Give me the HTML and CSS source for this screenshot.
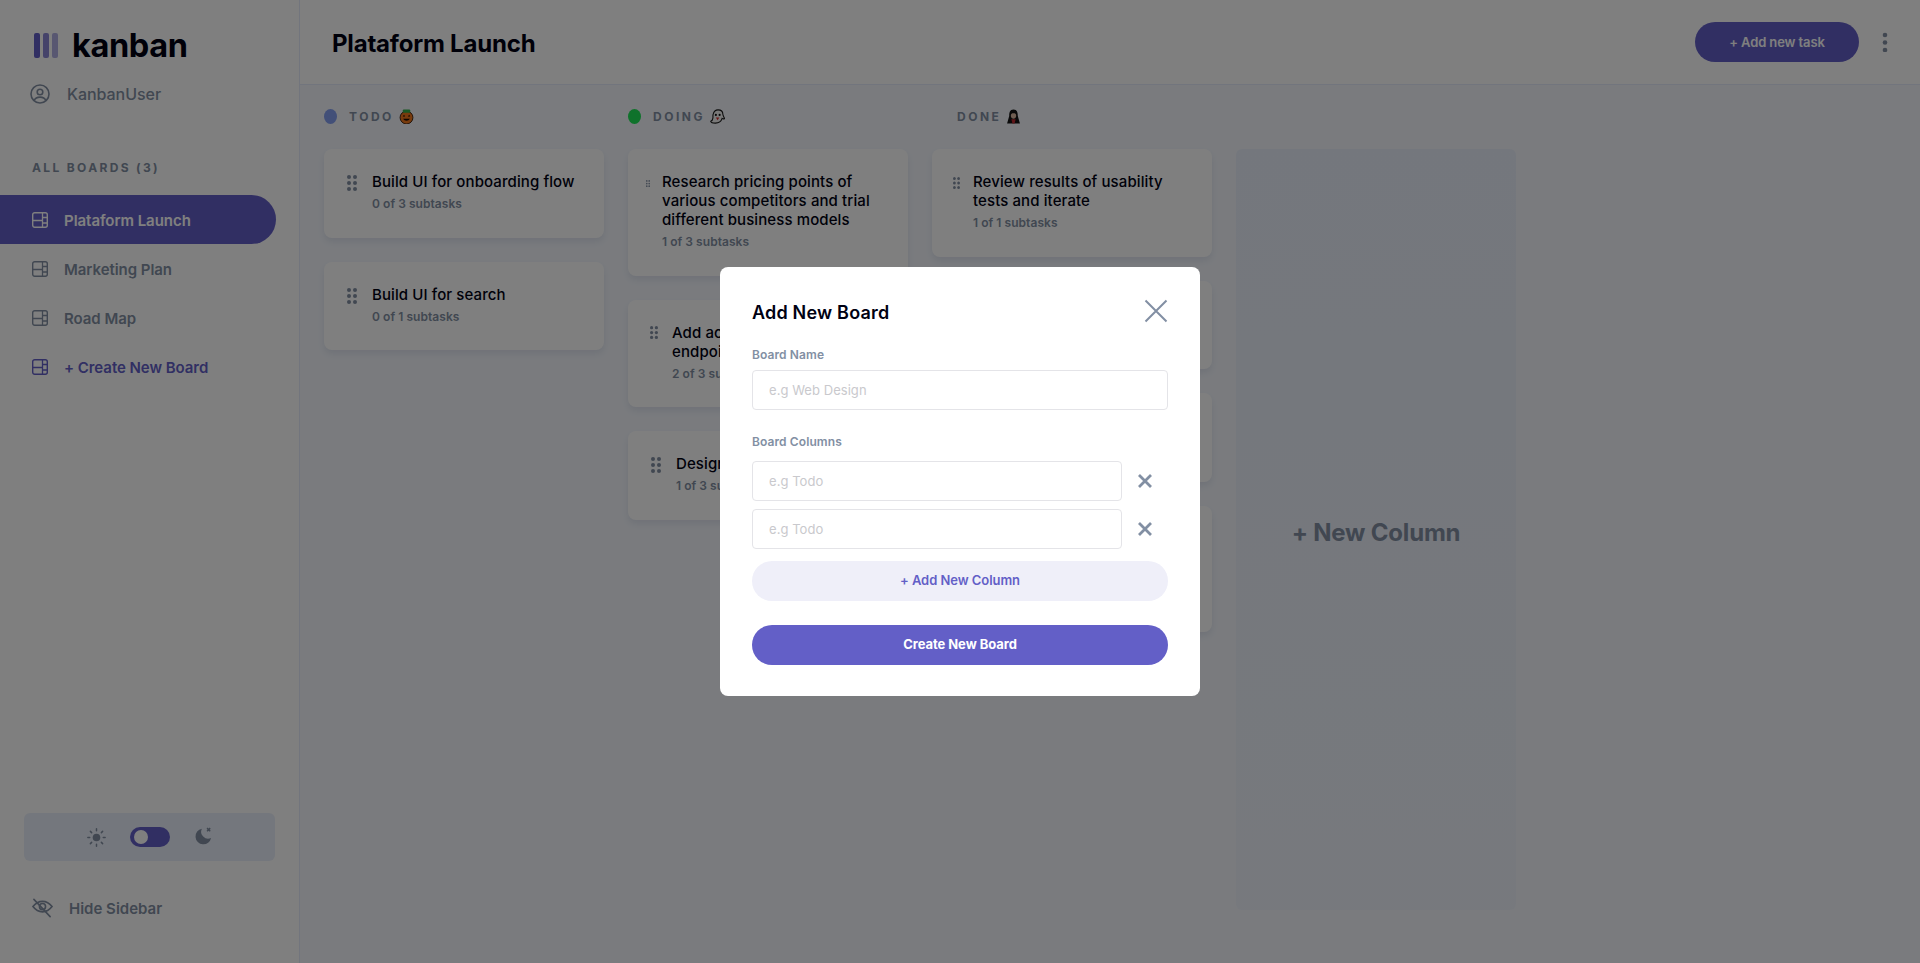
FILE: index.html
```html
<!DOCTYPE html>
<html lang="en">
<head>
    <meta charset="UTF-8"/>
    <meta name="viewport" content="width=device-width, initial-scale=1.0"/>
    <title>Kanban</title>
    <link rel="stylesheet" href="styles.css">
</head>
<body>
    <svg class="defs" width="0" height="0">
        <symbol id="board" viewBox="0 0 16 16">
            <rect x="0.7" y="0.7" width="14.6" height="14.6" rx="2" fill="none" stroke="currentColor" stroke-width="1.4"/>
            <path d="M1 8.500H10.500M10.500 1V15M10.500 5.500H15M10.500 11H15" fill="none" stroke="currentColor" stroke-width="1.3"/>
        </symbol>
        <symbol id="grip" viewBox="0 0 10 16" preserveAspectRatio="none">
            <circle cx="2" cy="2" r="2"/><circle cx="8" cy="2" r="2"/>
            <circle cx="2" cy="8" r="2"/><circle cx="8" cy="8" r="2"/>
            <circle cx="2" cy="14" r="2"/><circle cx="8" cy="14" r="2"/>
        </symbol>
    </svg>

    <aside class="sidebar">
        <div class="logo">
            <svg class="logo-bars" viewBox="0 0 24 25">
                <rect width="6" height="25" rx="2" fill="#635fc7"/>
                <rect x="9" width="6" height="25" rx="2" fill="#635fc7" opacity="0.75"/>
                <rect x="18" width="6" height="25" rx="2" fill="#635fc7" opacity="0.5"/>
            </svg>
            <span class="logo-text">kanban</span>
        </div>
        <div class="user">
            <svg class="user-icon" viewBox="0 0 20 20" fill="none" stroke="currentColor" stroke-width="1.6">
                <circle cx="10" cy="10" r="9"/>
                <circle cx="10" cy="8" r="2.800"/>
                <path d="M4.200 16.400c1-2.400 3-3.300 5.800-3.300s4.800.9 5.800 3.300"/>
            </svg>
            <span>KanbanUser</span>
        </div>
        <h2 class="boards-title">ALL BOARDS (3)</h2>
        <nav class="boards">
            <a class="board-link active"><svg class="board-icon"><use href="#board"/></svg><span>Plataform Launch</span></a>
            <a class="board-link"><svg class="board-icon"><use href="#board"/></svg><span>Marketing Plan</span></a>
            <a class="board-link"><svg class="board-icon"><use href="#board"/></svg><span>Road Map</span></a>
            <a class="board-link create"><svg class="board-icon"><use href="#board"/></svg><span>+ Create New Board</span></a>
        </nav>
        <div class="theme">
            <svg class="sun" viewBox="0 0 18 18" fill="none" stroke="currentColor" stroke-width="1.400" stroke-linecap="round">
                <circle cx="9" cy="9" r="3.600" fill="currentColor" stroke="none"/>
                <path d="M9 .8v1.800M9 15.400v1.800M.8 9h1.800M15.400 9h1.800M3.200 3.200l1.200 1.200M13.600 13.600l1.200 1.200M14.800 3.200l-1.200 1.200M4.400 13.600l-1.200 1.200"/>
            </svg>
            <div class="toggle"><span class="knob"></span></div>
            <svg class="moon" viewBox="0 0 16 16">
                <path d="M7 1.500A7 7 0 1 0 15.200 9.800 6.200 6.200 0 0 1 7 1.500Z" fill="currentColor"/>
                <path d="M11.600 1l2.800 2.800M14.400 1l-2.800 2.800" stroke="currentColor" stroke-width="1.300" fill="none"/>
            </svg>
        </div>
        <div class="hide-sidebar">
            <svg class="eye" viewBox="0 0 22 20" fill="none" stroke="currentColor" stroke-width="1.700" stroke-linecap="round">
                <path d="M1 8.500C4 4.500 7 3 11 3s7 1.500 10 5.500c-3 4-6 5.500-10 5.500S4 12.500 1 8.500Z"/>
                <circle cx="11" cy="8.500" r="3.200"/>
                <path d="M2 1l17 18"/>
            </svg>
            <span>Hide Sidebar</span>
        </div>
    </aside>

    <main class="main">
        <header class="topbar">
            <h1>Plataform Launch</h1>
            <button class="add-task">+ Add new task</button>
            <svg class="more" viewBox="0 0 6 20"><circle cx="3" cy="3" r="2.300"/><circle cx="3" cy="10.500" r="2.300"/><circle cx="3" cy="18" r="2.300"/></svg>
        </header>

        <section class="board">
            <div class="column">
                <div class="column-head">
                    <span class="dot todo"></span>TODO
                    <svg class="emoji" viewBox="0 0 14 14"><circle cx="7" cy="8" r="6" fill="#f0761a" stroke="#2a1405" stroke-width="0.8"/><rect x="3.500" y="0.500" width="7" height="3" rx="1" fill="#35b04a"/><path d="M3.500 7l2.200 0-1-1.700zM8.300 7l2.200 0-1-1.700zM3.800 9.200c1.500 2.300 4.900 2.300 6.400 0z" fill="#1a0c03"/></svg>
                </div>
                <div class="card">
                    <svg class="grip"><use href="#grip"/></svg>
                    <div><h3>Build UI for onboarding flow</h3><p>0 of 3 subtasks</p></div>
                </div>
                <div class="card">
                    <svg class="grip"><use href="#grip"/></svg>
                    <div><h3>Build UI for search</h3><p>0 of 1 subtasks</p></div>
                </div>
            </div>

            <div class="column">
                <div class="column-head">
                    <span class="dot doing"></span>DOING
                    <svg class="emoji" viewBox="0 0 14 14"><path d="M7.500 .8c2.800 0 4.500 1.800 4.500 4.200 0 1.200 1.500 3 1.500 4-1 .4-1.600.2-2.200-.2C10.500 11.500 8 13.200 5 13.200 3 13.200 1 12.500.7 11.500c1.200-.4 1.800-1.500 2-3 .2-1.500-.2-2 .2-3.500C3.500 2.500 5 .8 7.500 .8Z" fill="#f2f2f2" stroke="#161616" stroke-width="1"/><circle cx="5.500" cy="5.500" r="1" fill="#111"/><circle cx="9" cy="5.500" r="1" fill="#111"/><path d="M5.500 8h3.200l-1.600 2.400z" fill="#d82a2a"/></svg>
                </div>
                <div class="card tiny">
                    <svg class="grip"><use href="#grip"/></svg>
                    <div><h3>Research pricing points of various competitors and trial different business models</h3><p>1 of 3 subtasks</p></div>
                </div>
                <div class="card mid">
                    <svg class="grip"><use href="#grip"/></svg>
                    <div><h3>Add account management endpoints</h3><p>2 of 3 subtasks</p></div>
                </div>
                <div class="card">
                    <svg class="grip"><use href="#grip"/></svg>
                    <div><h3>Design onboarding flow</h3><p>1 of 3 subtasks</p></div>
                </div>
            </div>

            <div class="column">
                <div class="column-head">
                    <span class="dot done"></span>DONE
                    <svg class="emoji" viewBox="0 0 14 14"><path d="M7 .5C3.500.5 3 3.500 3 6.500L1 13.500h12l-2-7c0-3-.5-6-4-6Z" fill="#141414"/><path d="M4.500 6.500C4.500 4.500 5.500 4 7 4s2.500.5 2.500 2.500C9.500 8 8.200 9 7 9S4.500 8 4.500 6.500Z" fill="#e0bda4"/><path d="M5 9.500h4l-1 4H6z" fill="#c02a30"/></svg>
                </div>
                <div class="card snug">
                    <svg class="grip"><use href="#grip"/></svg>
                    <div><h3>Review results of usability tests and iterate</h3><p>1 of 1 subtasks</p></div>
                </div>
                <div class="card blank one"></div>
                <div class="card blank one"></div>
                <div class="card blank three"></div>
            </div>

            <div class="new-column">+ New Column</div>
        </section>
    </main>

    <div class="overlay"></div>

    <form class="modal">
        <div class="modal-head">
            <h2>Add New Board</h2>
            <svg class="modal-close" viewBox="0 0 24 24" fill="none" stroke="currentColor" stroke-width="2"><path d="M1.500 1.500l21 21M22.500 1.500l-21 21"/></svg>
        </div>
        <label class="field-label" for="boardName">Board Name</label>
        <input class="field" id="boardName" type="text" placeholder="e.g Web Design">
        <label class="field-label columns-label">Board Columns</label>
        <div class="column-row">
            <input class="field" type="text" placeholder="e.g Todo">
            <svg class="remove" viewBox="0 0 14 14" fill="none" stroke="currentColor" stroke-width="2.800"><path d="M1 1l12 12M13 1L1 13"/></svg>
        </div>
        <div class="column-row">
            <input class="field" type="text" placeholder="e.g Todo">
            <svg class="remove" viewBox="0 0 14 14" fill="none" stroke="currentColor" stroke-width="2.800"><path d="M1 1l12 12M13 1L1 13"/></svg>
        </div>
        <button class="btn btn-light" type="button">+ Add New Column</button>
        <button class="btn btn-primary" type="button">Create New Board</button>
    </form>
</body>
</html>
```

FILE: styles.css
```css
* {
    box-sizing: border-box;
}
body {
    height: 100vh;
    margin: 0;
    display: flex;
    overflow: hidden;
    font-family: Inter, "Open Sans", sans-serif;
    background-color: #f4f7fd;
    color: #000112;
}
.defs {
    position: absolute;
}
h1, h2, h3, p {
    margin: 0;
}

/* sidebar */
.sidebar {
    width: 300px;
    flex-shrink: 0;
    display: flex;
    flex-direction: column;
    background-color: #fff;
    border-right: 1px solid #e4ebfa;
    padding-bottom: 45px;
}
.logo {
    display: flex;
    align-items: center;
    gap: 14px;
    height: 25px;
    margin: 33px 0 0 34px;
}
.logo-bars {
    width: 24px;
    height: 25px;
}
.logo-text {
    font-size: 32.5px;
    line-height: 24px;
    font-weight: 700;
    letter-spacing: -0.4px;
}
.user {
    display: flex;
    align-items: center;
    gap: 17px;
    height: 20px;
    margin: 26px 0 0 30px;
    font-size: 16px;
    font-weight: 500;
    letter-spacing: -0.05px;
    color: #828fa3;
}
.user-icon {
    width: 20px;
    height: 20px;
}
.boards-title {
    margin: 56px 0 20px 32px;
    font-size: 12px;
    line-height: 15px;
    font-weight: 700;
    letter-spacing: 2.35px;
    color: #828fa3;
}
.board-link {
    display: flex;
    align-items: center;
    gap: 16px;
    width: 276px;
    height: 49px;
    padding-left: 32px;
    font-size: 15px;
    font-weight: 600;
    letter-spacing: -0.05px;
    color: #828fa3;
}
.board-link span {
    padding-top: 2px;
}
.board-link.active {
    background-color: #635fc7;
    color: #fff;
    border-radius: 0 25px 25px 0;
}
.board-link.create {
    color: #635fc7;
}
.board-icon {
    width: 16px;
    height: 16px;
}
.theme {
    margin: auto 0 0 24px;
    width: 251px;
    height: 48px;
    display: flex;
    align-items: center;
    justify-content: center;
    gap: 24px;
    background-color: #e9effa;
    border-radius: 6px;
    color: #828fa3;
}
.sun {
    width: 19px;
    height: 19px;
}
.moon {
    width: 18px;
    height: 18px;
    margin-bottom: 2px;
}
.toggle {
    width: 40px;
    height: 20px;
    padding: 3px 4px;
    background-color: #635fc7;
    border-radius: 10px;
}
.knob {
    display: block;
    width: 14px;
    height: 14px;
    background-color: #fff;
    border-radius: 50%;
}
.hide-sidebar {
    display: flex;
    align-items: center;
    gap: 16px;
    height: 21px;
    margin: 36px 0 0 32px;
    font-size: 15px;
    font-weight: 600;
    color: #828fa3;
}
.hide-sidebar span {
    padding-top: 2px;
}
.eye {
    width: 21px;
    height: 20px;
}

/* main */
.main {
    flex: 1;
    display: flex;
    flex-direction: column;
}
.topbar {
    height: 85px;
    flex-shrink: 0;
    display: flex;
    align-items: center;
    padding: 0 32px 0 32px;
    background-color: #fff;
    border-bottom: 1px solid #e4ebfa;
}
.topbar h1 {
    flex: 1;
    padding-top: 2px;
    font-size: 24px;
    font-weight: 700;
    letter-spacing: -0.2px;
}
.add-task {
    width: 164px;
    height: 40px;
    margin-right: 23px;
    border: none;
    border-radius: 20px;
    background-color: #635fc7;
    color: #fff;
    font: 600 13px Inter, sans-serif;
    letter-spacing: -0.1px;
}
.more {
    width: 6px;
    height: 20px;
    fill: #828fa3;
}
.board {
    flex: 1;
    display: flex;
    gap: 24px;
    padding: 24px;
    min-height: 0;
}
.column {
    width: 280px;
    display: flex;
    flex-direction: column;
    gap: 24px;
}
.column-head {
    display: flex;
    align-items: center;
    height: 15px;
    margin-bottom: 1px;
    font-size: 12px;
    font-weight: 700;
    letter-spacing: 2.5px;
    color: #828fa3;
}
.dot {
    width: 13px;
    height: 15px;
    margin-right: 12px;
    border-radius: 50%;
}
.dot.todo {
    background-color: #849ef0;
}
.dot.doing {
    background-color: #1ee456;
}
.emoji {
    width: 15px;
    height: 15px;
    margin-left: 5px;
}
.card {
    display: flex;
    align-items: flex-start;
    padding: 23px 20px 26px 23px;
    background-color: #fff;
    border-radius: 8px;
    box-shadow: 0 4px 6px rgba(54, 78, 126, 0.1);
}
.card.blank {
    padding: 0;
}
.card.one {
    height: 88.6px;
}
.card.three {
    height: 126.6px;
}
.card h3 {
    font-size: 15px;
    line-height: 19px;
    font-weight: 500;
    letter-spacing: 0.1px;
}
.card p {
    margin-top: 5px;
    font-size: 12px;
    line-height: 15.6px;
    font-weight: 600;
    letter-spacing: 0.05px;
    color: #828fa3;
}
.grip {
    width: 10px;
    height: 16px;
    flex-shrink: 0;
    margin: 3px 15px 0 0;
    fill: #828fa3;
}
.card.tiny {
    padding-left: 17px;
}
.card.tiny .grip {
    width: 4px;
    height: 7px;
    margin: 8px 12px 0 1px;
}
.card.mid {
    padding-left: 22px;
}
.card.mid .grip {
    width: 8px;
    height: 13px;
    margin-right: 14px;
}
.card.snug {
    padding-left: 21px;
}
.card.snug .grip {
    width: 7px;
    height: 12px;
    margin: 5px 13px 0 0;
}
.new-column {
    width: 280px;
    height: 761px;
    display: flex;
    align-items: center;
    justify-content: center;
    margin-top: 40px;
    padding-top: 5px;
    background: linear-gradient(180deg, #e9effa 0%, rgba(233, 239, 250, 0.5) 100%);
    border-radius: 6px;
    font-size: 24px;
    font-weight: 700;
    letter-spacing: -0.2px;
    color: #828fa3;
}

/* modal */
.overlay {
    position: fixed;
    inset: 0;
    z-index: 10;
    background-color: rgba(0, 0, 0, 0.5);
}
.modal {
    position: fixed;
    z-index: 30;
    top: 267px;
    left: 720px;
    width: 480px;
    height: 429px;
    padding: 32px;
    background-color: #fff;
    border-radius: 8px;
}
.modal-head {
    display: flex;
    align-items: center;
    justify-content: space-between;
    height: 24px;
    margin-bottom: 24px;
}
.modal-head h2 {
    padding-top: 2px;
    font-size: 18px;
    font-weight: 600;
    letter-spacing: 0.2px;
}
.modal-close {
    width: 24px;
    height: 24px;
    color: #828fa3;
}
.field-label {
    display: block;
    margin-bottom: 8px;
    font-size: 12px;
    line-height: 15px;
    font-weight: 600;
    letter-spacing: 0.1px;
    color: #828fa3;
}
.columns-label {
    margin: 24px 0 12px;
}
.field {
    width: 100%;
    height: 40px;
    padding: 0 16px;
    border: 1px solid #e4e4e8;
    border-radius: 4px;
    outline: none;
    font: 400 13px Inter, sans-serif;
    letter-spacing: 0.05px;
}
.field::placeholder {
    color: #c9c9cd;
}
.column-row {
    display: flex;
    align-items: center;
    margin-bottom: 8px;
}
.column-row .field {
    width: 370px;
}
.remove {
    width: 14px;
    height: 14px;
    margin-left: 16px;
    flex-shrink: 0;
    color: #828fa3;
}
.btn {
    display: block;
    width: 100%;
    height: 40px;
    padding: 0 0 2px;
    border: none;
    border-radius: 20px;
    font: 600 13px Inter, sans-serif;
    letter-spacing: -0.05px;
}
.btn-light {
    margin-top: 12px;
    background-color: #efeff9;
    color: #635fc7;
}
.btn-primary {
    margin-top: 24px;
    background-color: #635fc7;
    color: #fff;
    font-weight: 700;
}
```
